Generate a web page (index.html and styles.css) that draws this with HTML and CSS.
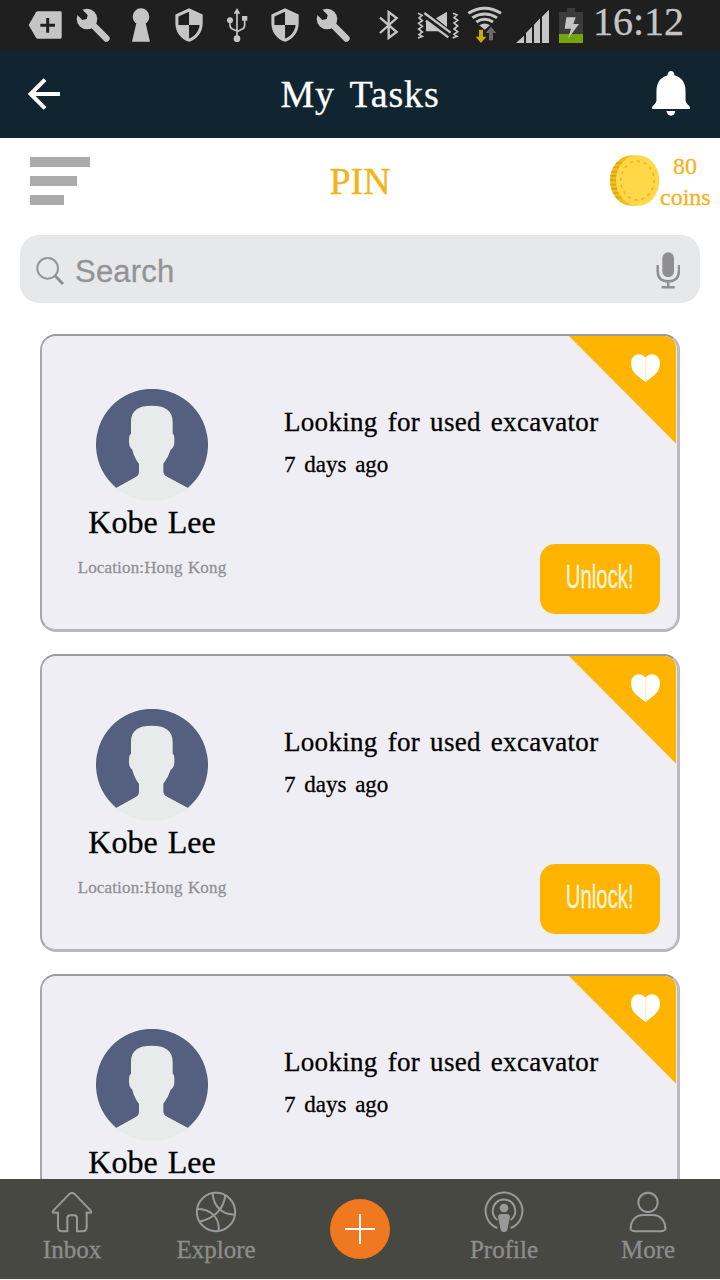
FILE: index.html
```
<!DOCTYPE html>
<html lang="en">
<head>
    <meta charset="UTF-8">
    <meta name="viewport" content="width=device-width, initial-scale=1.0">
    <title>My Tasks</title>
    <link rel="stylesheet" href="styles.css">
</head>
<body>
    <!-- Shared shapes -->
    <svg class="defs" width="0" height="0">
        <symbol id="wrench" viewBox="207 0 144 150">
            <circle cx="261" cy="57" r="31"/>
            <path d="M261 57L319 115" stroke="#c5c5c5" stroke-width="20" stroke-linecap="round"/>
            <path d="M222 18L246 28L263 45L260 57L247 60L230 43Z" fill="#1f1f1f"/>
        </symbol>
        <symbol id="shield" viewBox="495 0 144 150">
            <path transform="translate(512.5 20.5) scale(4.55)" d="M12 1L3 5v6c0 5.55 3.84 10.74 9 12 5.16-1.26 9-6.45 9-12V5l-9-4zm0 10.99h7c-.53 4.12-3.28 7.79-7 8.94V12H5V6.3l7-3.11v8.8z"/>
        </symbol>
        <symbol id="avatar" viewBox="198 191 336 336">
            <circle cx="366" cy="359" r="168" fill="#e7eceb"/>
            <path d="M259 488A168 168 0 1 1 473 488L366 430Z" fill="#556080"/>
            <path fill="#e7eceb" d="M303 325V290C303 254 326 241 365 241S428 254 428 290V325Q434 328 433 345Q434 367 422 373Q414 398 400 415V440Q401 449 410 454L473 488V500H259V488L316 456Q327 450 327 440V415Q313 398 307 373Q296 366 297 345Q297 328 303 325Z"/>
        </symbol>
        <symbol id="ribbon" viewBox="0 0 108 108">
            <path d="M0 0H95Q107 1 107 13V107.500Z" fill="#ffb400"/>
            <path d="M76.500 46C70 41 62 36 62 28C62 17 73 16 76.500 22C80 16 91 17 91 28C91 36 83 41 76.500 46Z" fill="#fff"/>
            <path d="M76.500 21V45" stroke="#ffefc8" stroke-width="1.500"/>
        </symbol>
    </svg>

    <div class="app">
        <div class="status-bar">
            <svg class="status-icon" viewBox="63 0 144 150">
                <path d="M86 75L108 37Q110 34 114 34H181Q185 34 185 38V112Q185 116 181 116H114Q110 116 108 113Z"/>
                <path d="M143 54V98M121 76H165" stroke="#1f1f1f" stroke-width="9"/>
            </svg>
            <svg class="status-icon"><use href="#wrench"/></svg>
            <svg class="status-icon" viewBox="351 0 144 150">
                <circle cx="423" cy="50" r="25"/>
                <path d="M410 65H436L450 125H396Z"/>
            </svg>
            <svg class="status-icon"><use href="#shield"/></svg>
            <svg class="status-icon" viewBox="639 0 144 150">
                <path d="M711 24L721 41H701Z"/>
                <circle cx="690" cy="61" r="9"/>
                <rect x="726" y="48" width="16" height="14"/>
                <circle cx="711" cy="116" r="10"/>
                <path class="status-line" d="M711 38V112M690 65V76Q690 84 697 87L711 93M734 60V76Q734 84 727 87L711 95"/>
            </svg>
            <svg class="status-icon"><use href="#shield"/></svg>
            <svg class="status-icon"><use href="#wrench"/></svg>
            <svg class="status-icon bluetooth" viewBox="15 0 144 150">
                <path class="status-line thick" d="M60 53L110 96L86 114V36L110 54L60 99"/>
            </svg>
            <svg class="status-icon" viewBox="159 0 144 150">
                <path d="M198 61L242 94H198ZM228 55L261 35V82Z"/>
                <path d="M193 39L272 98M198 62L265 112" stroke="#c5c5c5" stroke-width="7"/>
                <path class="status-line" d="M174 40L186 46L177 54L187 62L176 70L187 79L176 87L187 96L177 104L187 109L174 114M279 40L291 45L282 53L293 61L282 69L293 78L282 87L293 95L282 103L291 109L278 114"/>
            </svg>
            <svg class="status-icon" viewBox="303 0 144 150">
                <path class="wifi-line" d="M325 40Q374 10 423 40M337 53Q374 31 411 53M349 66Q374 50 399 66"/>
                <path d="M358 76Q374 65 390 76L374 89Z"/>
                <path d="M357 89H369V110H379L363 129L347 110H357Z" fill="#c9a80d"/>
                <path d="M387 121H399V99H409L393 80L377 99H387Z" fill="#6b6b6b"/>
            </svg>
            <svg class="status-icon signal" viewBox="447 0 138 150">
                <path d="M468 129L492 107V129ZM498 99L516 80V129H498ZM522 74L540 55V129H522ZM546 50L567 29V129H546Z"/>
            </svg>
            <svg class="status-icon battery" viewBox="585 0 96 150">
                <path d="M597 36H621V24H645V36H669V102H597Z" fill="#3b3b3b"/>
                <path d="M597 102H669V129H597Z" fill="#74a50a"/>
                <path d="M619 52H647L640 72H657L624 116L633 86H614Z"/>
            </svg>
            <span class="time">16:12</span>
        </div>

        <div class="header">
            <svg class="back" viewBox="84 234 96 96">
                <path d="M180 282H94M135 239L92 282L135 325" fill="none" stroke="#fff" stroke-width="12"/>
            </svg>
            <h1>My Tasks</h1>
            <svg class="bell" viewBox="876 212 114 136">
                <path fill="#fff" d="M923 225V221Q925 212 933 212T943 221V225Q977 234 977 275V302Q977 308 990 320V327H876V320Q889 308 889 302V275Q889 234 923 225ZM919 333H946Q944 347 933 347T919 333Z"/>
            </svg>
        </div>

        <div class="content">
            <div class="toolbar">
                <div class="filter">
                    <span class="line"></span>
                    <span class="line medium"></span>
                    <span class="line short"></span>
                </div>
                <div class="pin">PIN</div>
                <div class="coins">
                    <svg class="coin" viewBox="750 47 150 152">
                        <clipPath id="coin-side"><ellipse cx="816" cy="123" rx="66" ry="76"/></clipPath>
                        <g clip-path="url(#coin-side)">
                            <rect x="750" y="47" width="132" height="152" fill="#f2bd18"/>
                            <path d="M750 97H785M750 109H785M750 122H785M750 135H785M750 148H785M750 161H790M750 174H800M750 84H790M750 71H800" stroke="#dda414" stroke-width="5"/>
                        </g>
                        <ellipse cx="833" cy="123" rx="65" ry="76" fill="#ffd84a"/>
                        <ellipse cx="832" cy="123" rx="50" ry="58" fill="none" stroke="#e9b51c" stroke-width="5" stroke-dasharray="9 12"/>
                    </svg>
                    <div class="coins-text">80<br>coins</div>
                </div>
            </div>

            <div class="search">
                <svg class="magnifier" viewBox="108 350 84 84">
                    <circle cx="143" cy="384" r="31" fill="none" stroke="#949497" stroke-width="6"/>
                    <path d="M166 407L189 431" stroke="#8e8e93" stroke-width="9"/>
                </svg>
                <span class="placeholder">Search</span>
                <svg class="mic" viewBox="887 334 72 111">
                    <rect x="906" y="335" width="35" height="75" rx="17.500" fill="#8e8e93"/>
                    <path d="M892 373V391Q892 422 923.500 422T956 391V373M923.500 422V440M904 440H943" fill="none" stroke="#8e8e93" stroke-width="7.500"/>
                </svg>
            </div>

            <div class="cards">
                <div class="card">
                    <div class="person">
                        <svg class="avatar"><use href="#avatar"/></svg>
                        <div class="name">Kobe Lee</div>
                        <div class="location">Location:Hong Kong</div>
                    </div>
                    <div class="details">
                        <div class="title">Looking for used excavator</div>
                        <div class="date">7 days ago</div>
                        <div class="unlock"><span>Unlock!</span></div>
                    </div>
                    <svg class="ribbon"><use href="#ribbon"/></svg>
                </div>

                <div class="card">
                    <div class="person">
                        <svg class="avatar"><use href="#avatar"/></svg>
                        <div class="name">Kobe Lee</div>
                        <div class="location">Location:Hong Kong</div>
                    </div>
                    <div class="details">
                        <div class="title">Looking for used excavator</div>
                        <div class="date">7 days ago</div>
                        <div class="unlock"><span>Unlock!</span></div>
                    </div>
                    <svg class="ribbon"><use href="#ribbon"/></svg>
                </div>

                <div class="card">
                    <div class="person">
                        <svg class="avatar"><use href="#avatar"/></svg>
                        <div class="name">Kobe Lee</div>
                    </div>
                    <div class="details">
                        <div class="title">Looking for used excavator</div>
                        <div class="date">7 days ago</div>
                    </div>
                    <svg class="ribbon"><use href="#ribbon"/></svg>
                </div>
            </div>
        </div>

        <div class="nav">
            <div class="nav-item">
                <svg viewBox="156 66 120 120">
                    <path d="M160 122L207 73Q216 64 225 73L272 122Q276 128 270 128H260V172Q260 184 248 184H231V145Q231 136 222 136H211Q202 136 202 145V184H186Q174 184 174 172V128H162Q156 128 160 122Z"/>
                </svg>
                <span>Inbox</span>
            </div>
            <div class="nav-item">
                <svg viewBox="588 66 120 120">
                    <circle cx="648" cy="126" r="57.500"/>
                    <path d="M638 70C640 110 670 137 706 133M676 76C670 120 640 145 598 155M591 117C630 117 660 140 656 183"/>
                </svg>
                <span>Explore</span>
            </div>
            <div class="nav-item add">
                <svg viewBox="0 0 60 60">
                    <circle cx="30" cy="30" r="30"/>
                    <path d="M15 30H45M30 15V45"/>
                </svg>
            </div>
            <div class="nav-item">
                <svg viewBox="372 66 120 120">
                    <path d="M412 174A55 55 0 1 1 452 174M412 150A34 34 0 1 1 452 150"/>
                    <circle class="solid" cx="432" cy="114" r="13"/>
                    <path class="solid" d="M423 132H441Q450 132 450 141L442 180Q441 186 432 186T422 180L414 141Q414 132 423 132Z"/>
                </svg>
                <span>Profile</span>
            </div>
            <div class="nav-item">
                <svg viewBox="804 66 120 120">
                    <circle cx="864" cy="97" r="29"/>
                    <path d="M812 177C812 151 828 135 850 135H878C900 135 916 151 916 177Q917 184 890 184H838Q811 184 812 177Z"/>
                </svg>
                <span>More</span>
            </div>
        </div>
    </div>
</body>
</html>
```
FILE: styles.css
```
* {
    box-sizing: border-box;
}

body {
    margin: 0;
    font-family: "Liberation Serif", "Times New Roman", serif;
    background-color: #fff;
    color: #000;
    -webkit-text-stroke: 0.3px;
}

svg {
    display: block;
    flex: none;
}

.defs {
    position: absolute;
}

.app {
    display: flex;
    flex-direction: column;
    width: 720px;
    height: 1280px;
    padding-bottom: 1px;
    overflow: hidden;
    background-color: #f4f4f4;
}

/* Status bar */
.status-bar {
    display: flex;
    flex: none;
    height: 50px;
    padding-left: 21px;
    background-color: #1f1f1f;
}

.status-icon {
    width: 48px;
    height: 50px;
    fill: #c5c5c5;
}

.status-icon.bluetooth {
    margin-left: 8px;
}

.status-icon.signal {
    width: 46px;
}

.status-icon.battery {
    width: 32px;
}

.status-line {
    fill: none;
    stroke: #c5c5c5;
    stroke-width: 5;
}

.status-line.thick {
    stroke-width: 7;
}

.wifi-line {
    fill: none;
    stroke: #c5c5c5;
    stroke-width: 9;
}

.time {
    margin-left: 6px;
    font-size: 40px;
    line-height: 44px;
    color: #c5c5c5;
}

/* Header */
.header {
    display: grid;
    grid-template-columns: 60px 1fr 60px;
    align-items: center;
    flex: none;
    height: 88px;
    background-color: #102530;
}

.header h1 {
    margin: 0;
    text-align: center;
    font-size: 38px;
    font-weight: normal;
    line-height: 44px;
    letter-spacing: 0.8px;
    word-spacing: 5px;
    color: #fff;
}

.back {
    width: 32px;
    height: 32px;
    margin-left: 28px;
}

.bell {
    width: 38px;
    height: 45px;
    margin: -2px 0 0 -8px;
}

/* Content */
.content {
    flex: 1;
    min-height: 0;
    overflow: hidden;
    background-color: #fff;
}

.toolbar {
    display: grid;
    grid-template-columns: 110px 1fr 110px;
    align-items: center;
    height: 86px;
}

.filter {
    display: flex;
    flex-direction: column;
    gap: 9px;
    margin: -1px 0 0 30px;
}

.line {
    width: 60px;
    height: 10px;
    background-color: #ababab;
}

.line.medium {
    width: 47px;
}

.line.short {
    width: 34px;
}

.pin {
    text-align: center;
    font-size: 38px;
    line-height: 44px;
    color: #f5b31b;
}

.coins {
    display: flex;
    align-items: center;
}

.coin {
    width: 50px;
    height: 51px;
    margin-top: -1px;
}

.coins-text {
    width: 50px;
    margin-top: 2px;
    text-align: center;
    white-space: nowrap;
    font-size: 24px;
    line-height: 31px;
    color: #f5b31b;
}

.search {
    display: flex;
    align-items: center;
    height: 68px;
    margin: 11px 20px 31px;
    padding: 0 20px 0 16px;
    border-radius: 19px;
    background-color: #e7e8ea;
}

.magnifier {
    width: 28px;
    height: 28px;
    margin-top: 4px;
}

.placeholder {
    flex: 1;
    margin: 5px 0 0 11px;
    font-family: "Liberation Sans", Arial, sans-serif;
    font-size: 31px;
    letter-spacing: 0.2px;
    color: #939397;
}

.mic {
    width: 24px;
    height: 37px;
    margin-top: 2px;
}

/* Cards */
.cards {
    display: flex;
    flex-direction: column;
    gap: 22px;
    margin: 0 40px;
}

.card {
    position: relative;
    display: flex;
    height: 298px;
    border: 3px solid;
    border-color: #999a9c #bcbcc0 #b7b8bb #a5a7a9;
    border-width: 2px 3px 3px 2px;
    border-radius: 16px;
    background-color: #efeef4;
}

.person {
    display: flex;
    flex-direction: column;
    align-items: center;
    width: 220px;
    padding-top: 53px;
}

.avatar {
    width: 112px;
    height: 112px;
}

.name {
    font-size: 32px;
    line-height: 43px;
    word-spacing: 2px;
}

.location {
    font-size: 17px;
    line-height: 48px;
    letter-spacing: 0.15px;
    word-spacing: 1px;
    color: #919194;
}

.details {
    display: flex;
    flex: 1;
    flex-direction: column;
    padding: 64px 17px 15px 22px;
}

.title {
    font-size: 27px;
    line-height: 44px;
    letter-spacing: 0.3px;
    word-spacing: 3px;
    white-space: nowrap;
}

.date {
    font-size: 23px;
    line-height: 42px;
    word-spacing: 3px;
}

.unlock {
    display: flex;
    justify-content: center;
    align-self: flex-end;
    width: 120px;
    height: 70px;
    margin-top: auto;
    border-radius: 15px;
    background-color: #ffb400;
}

.unlock span {
    font-family: "Liberation Sans", Arial, sans-serif;
    font-size: 34px;
    line-height: 65px;
    color: #fff6df;
    transform: scaleX(0.6);
}

.ribbon {
    position: absolute;
    top: 0;
    right: 0;
    width: 108px;
    height: 108px;
}

/* Bottom navigation */
.nav {
    display: grid;
    grid-template-columns: repeat(5, 1fr);
    flex: none;
    height: 100px;
    background-color: #484843;
}

.nav-item {
    display: flex;
    flex-direction: column;
    align-items: center;
    padding-top: 13px;
    font-size: 25px;
    line-height: 35px;
    color: #8e8e8c;
}

.nav-item svg {
    width: 40px;
    height: 40px;
    overflow: visible;
    fill: none;
    stroke: #999;
    stroke-width: 6;
}

.nav-item .solid {
    fill: #999;
    stroke: none;
}

.nav-item.add {
    justify-content: center;
    padding-top: 0;
}

.nav-item.add svg {
    width: 60px;
    height: 60px;
    stroke: #fff;
    stroke-width: 2;
}

.nav-item.add circle {
    fill: #f07820;
    stroke: none;
}
```
